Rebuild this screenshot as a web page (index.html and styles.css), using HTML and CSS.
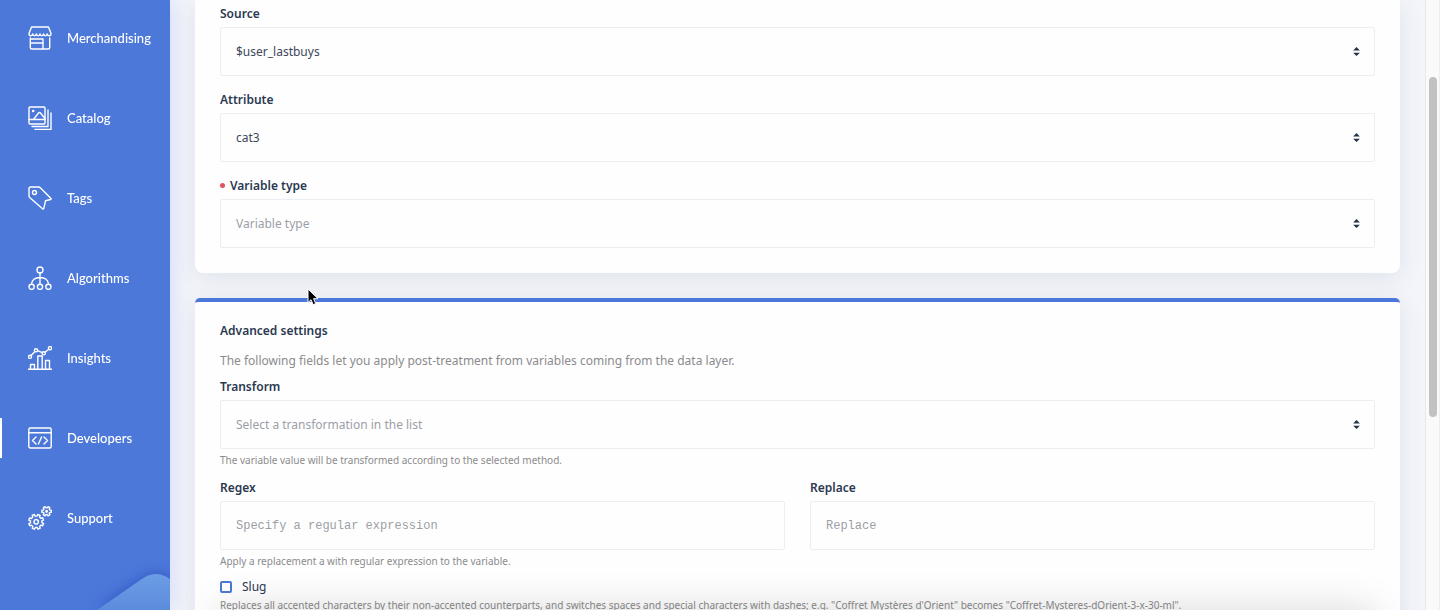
FILE: index.html
```html
<!DOCTYPE html>
<html lang="en">
<head>
    <meta charset="UTF-8">
    <meta name="viewport" content="width=device-width, initial-scale=1.0">
    <title>Variable settings</title>
    <link rel="stylesheet" href="styles.css">
</head>
<body>
    <aside class="sidebar">
        <nav class="menu">
            <a href="#" class="menu-item">
                <svg class="icon" viewBox="0 0 24 24"><path d="M3.500 1h17l2.500 6.500c0 3-3.200 3-3.800.4-.6 2.600-3 2.600-3.600 0-.6 2.600-3 2.600-3.600 0-.6 2.600-3 2.600-3.600 0-.6 2.600-3 2.600-3.600 0C4.200 10.500 1 10.500 1 7.500z"/><path d="M2.300 12v9.500c0 1 .5 1.500 1.500 1.500h16.400c1 0 1.500-.5 1.500-1.500V12M2.500 17h12.500M15 13v10M2.500 13H15"/></svg>
                <span>Merchandising</span>
            </a>
            <a href="#" class="menu-item">
                <svg class="icon" viewBox="0 0 24 24"><rect x="1" y="1" width="16" height="17" rx="1"/><path d="M1 13.500h16M5.500 13.500l5-6.500c.6-.7 1.400-.7 2 0l4.500 5.500M20 4v16.500H4M23 7v16.500H7"/><circle cx="5.200" cy="5" r=".6"/></svg>
                <span>Catalog</span>
            </a>
            <a href="#" class="menu-item">
                <svg class="icon" viewBox="0 0 24 24"><path d="M2.500 1h8c.8 0 1.300.2 1.800.7L23 12.500c.3.4.1.8-.4 1l-5.100 1.300-1.700 7.500c-.2.8-.8.900-1.300.4L1.700 11.500C1.200 11 1 10.500 1 9.800V2.500C1 1.500 1.500 1 2.500 1z"/><circle cx="6.500" cy="6.500" r="2"/></svg>
                <span>Tags</span>
            </a>
            <a href="#" class="menu-item">
                <svg class="icon" viewBox="0 0 24 24"><circle cx="12" cy="4" r="3"/><circle cx="3.600" cy="20.800" r="2.600"/><circle cx="12" cy="20.800" r="2.600"/><circle cx="20.400" cy="20.800" r="2.600"/><path d="M12 7v11.200M3.600 18.200c0-4.200 3.400-6.700 8.400-6.700s8.400 2.500 8.400 6.700"/></svg>
                <span>Algorithms</span>
            </a>
            <a href="#" class="menu-item">
                <svg class="icon" viewBox="0 0 24 24"><path d="M0 23.300h24M2.500 23v-4.500h4V23M9.800 23V10h4.400v13M17.500 23v-8.500h4V23M3 9.500l4-4M9.500 4.700l4.800 2M17 6.300l3.800-3"/><circle cx="2" cy="10.800" r="1.600"/><circle cx="8" cy="4.300" r="1.600"/><circle cx="15.700" cy="7.300" r="1.600"/><circle cx="22" cy="2.200" r="1.600"/></svg>
                <span>Insights</span>
            </a>
            <a href="#" class="menu-item active">
                <svg class="icon" viewBox="0 0 24 24"><rect x=".8" y="2" width="22.400" height="20" rx="1.500"/><path d="M1 6.800h22M8 11l-3.500 3.500L8 18M16 11l3.500 3.500L16 18M13.600 11l-3.200 7"/></svg>
                <span>Developers</span>
            </a>
            <a href="#" class="menu-item">
                <svg class="icon" viewBox="0 0 24 24">
                    <g transform="translate(8.200 15.800) rotate(22)">
                        <path d="M5.650-1.300L7.500-1.200V1.200L5.650 1.300 4.910 3.080 6.150 4.450 4.450 6.150 3.080 4.910 1.300 5.650 1.200 7.500H-1.200L-1.300 5.650-3.080 4.910-4.450 6.150-6.150 4.450-4.910 3.080-5.650 1.300-7.500 1.200V-1.200L-5.650-1.300-4.910-3.080-6.150-4.450-4.450-6.150-3.080-4.910-1.300-5.650-1.200-7.500H1.200L1.300-5.650 3.080-4.910 4.450-6.150 6.150-4.450 4.910-3.080z"/>
                        <circle r="2.200"/>
                    </g>
                    <g transform="translate(18.600 5.200)">
                        <path d="M3.200-1.200L4.700-1V1L3.200 1.200 2.640 2.170 3.220 3.570 1.480 4.570.56 3.370H-.56L-1.480 4.570-3.220 3.570-2.640 2.170-3.200 1.200-4.700 1V-1L-3.200-1.200-2.640-2.170-3.220-3.570-1.480-4.570-.56-3.370H.56L1.480-4.570 3.220-3.570 2.640-2.170z"/>
                        <circle r=".8"/>
                    </g>
                </svg>
                <span>Support</span>
            </a>
        </nav>
        <svg class="sidebar-shape" viewBox="0 0 100 60">
            <defs>
                <linearGradient id="shapeFill" x1="0" y1="0" x2="0" y2="1">
                    <stop offset="0" stop-color="#6b9de5"/>
                    <stop offset="1" stop-color="#5c8bdc"/>
                </linearGradient>
            </defs>
            <path d="M27 60L71 29.500Q85 20 97 27L110 36V60z" fill="url(#shapeFill)"/>
        </svg>
    </aside>

    <main class="content">
        <section class="card card-source">
            <div class="field">
                <label for="source">Source</label>
                <div class="select">
                    <select id="source">
                        <option>$user_lastbuys</option>
                    </select>
                    <svg class="arrows" viewBox="0 0 6 8"><path d="M0 3l3-3 3 3zM0 5h6L3 8z"/></svg>
                </div>
            </div>
            <div class="field">
                <label for="attribute">Attribute</label>
                <div class="select">
                    <select id="attribute">
                        <option>cat3</option>
                    </select>
                    <svg class="arrows" viewBox="0 0 6 8"><path d="M0 3l3-3 3 3zM0 5h6L3 8z"/></svg>
                </div>
            </div>
            <div class="field">
                <label for="type" class="required">Variable type</label>
                <div class="select">
                    <select id="type" class="empty">
                        <option value="">Variable type</option>
                    </select>
                    <svg class="arrows" viewBox="0 0 6 8"><path d="M0 3l3-3 3 3zM0 5h6L3 8z"/></svg>
                </div>
            </div>
        </section>

        <section class="card card-advanced">
            <h2>Advanced settings</h2>
            <p class="intro">The following fields let you apply post-treatment from variables coming from the data layer.</p>
            <div class="field">
                <label for="transform">Transform</label>
                <div class="select">
                    <select id="transform" class="empty">
                        <option value="">Select a transformation in the list</option>
                    </select>
                    <svg class="arrows" viewBox="0 0 6 8"><path d="M0 3l3-3 3 3zM0 5h6L3 8z"/></svg>
                </div>
                <p class="help">The variable value will be transformed according to the selected method.</p>
            </div>
            <div class="row">
                <div class="field">
                    <label for="regex">Regex</label>
                    <input type="text" id="regex" placeholder="Specify a regular expression">
                    <p class="help">Apply a replacement a with regular expression to the variable.</p>
                </div>
                <div class="field">
                    <label for="replace">Replace</label>
                    <input type="text" id="replace" placeholder="Replace">
                </div>
            </div>
            <div class="check">
                <input type="checkbox" id="slug">
                <label for="slug">Slug</label>
            </div>
            <p class="help help-slug">Replaces all accented characters by their non-accented counterparts, and switches spaces and special characters with dashes; e.g. "Coffret Mystères d'Orient" becomes "Coffret-Mysteres-dOrient-3-x-30-ml".</p>
        </section>
    </main>

    <div class="scrollbar">
        <div class="thumb"></div>
    </div>

    <div class="bottom-bar"></div>

    <svg class="cursor" viewBox="0 0 12 18"><path d="M1 1v13.500l3-2.800 2.200 5 2.500-1.100-2.100-4.900H11z"/></svg>
</body>
</html>
```
FILE: styles.css
```css
* {
    box-sizing: border-box;
}
body {
    margin: 0;
    height: 100vh;
    overflow: hidden;
    display: flex;
    background-color: #f3f5fa;
    color: #2b3950;
    font-family: "Noto Sans", sans-serif;
    font-size: 12px;
    line-height: 20px;
}

/* sidebar */
.sidebar {
    position: relative;
    z-index: 1;
    flex: 0 0 170px;
    padding-top: 18px;
    background-color: #4c78da;
    box-shadow: 0 0 20px rgba(90, 115, 240, 0.25);
}
.menu {
    display: flex;
    flex-direction: column;
    gap: 40px;
}
.menu-item {
    display: flex;
    align-items: center;
    gap: 15px;
    height: 40px;
    padding-left: 28px;
    color: #fff;
    font-family: Lato, sans-serif;
    font-size: 13px;
    font-weight: 500;
    text-decoration: none;
}
.menu-item.active {
    padding-left: 26px;
    border-left: 2px solid #fff;
}
.icon {
    width: 24px;
    height: 24px;
    fill: none;
    stroke: #fff;
    stroke-width: 1.4;
    stroke-linecap: round;
    stroke-linejoin: round;
}
.sidebar-shape {
    position: absolute;
    right: 0;
    bottom: 0;
    width: 100px;
    height: 60px;
}
.sidebar-shape path {
    filter: drop-shadow(0 0 7px #2f55c0);
}

/* cards */
.content {
    flex: 1;
    min-width: 0;
    padding: 0 25px;
}
.card {
    padding: 0 25px 25px;
    background-color: #fefefe;
    box-shadow: 0 5px 25px rgba(60, 70, 110, 0.1);
}
.card-source {
    padding-top: 4px;
    border-radius: 0 0 8px 8px;
}
.card-advanced {
    margin-top: 25px;
    padding-top: 19px;
    border-top: 4px solid #4c78da;
    border-radius: 5px;
}
h2 {
    margin: 0 0 10px;
    font-size: 12px;
    font-weight: 600;
}
p {
    margin: 0;
}
.intro {
    margin-bottom: 6px;
    color: #8b8b8d;
}

/* form */
.card-source .field + .field {
    margin-top: 14px;
}
.field label {
    display: block;
    margin-bottom: 3px;
    font-weight: 600;
}
.required::before {
    content: "";
    display: inline-block;
    width: 5px;
    height: 5px;
    margin-right: 5px;
    border-radius: 50%;
    background-color: #e0525c;
    vertical-align: 2px;
}
.select {
    display: grid;
    align-items: center;
}
.select select,
.arrows {
    grid-area: 1 / 1;
}
select,
input[type="text"] {
    display: block;
    width: 100%;
    height: 49px;
    margin: 0;
    padding: 0 15px;
    border: 1px solid #edeef2;
    border-radius: 2px;
    background-color: transparent;
    color: #3c475a;
    font-family: inherit;
    font-size: 12px;
    appearance: none;
}
select.empty {
    color: #9c9fa7;
}
input[type="text"] {
    font-family: "Courier New", "Liberation Mono", monospace;
}
input::placeholder {
    color: #9c9fa7;
}
.arrows {
    justify-self: end;
    width: 7px;
    height: 9px;
    margin-right: 15px;
    fill: #253248;
    pointer-events: none;
}
.help {
    margin-top: 3px;
    color: #8b8b8d;
    font-size: 10px;
    line-height: 16px;
}
.row {
    display: grid;
    grid-template-columns: 1fr 1fr;
    gap: 25px;
    margin-top: 10px;
}
.check {
    display: flex;
    align-items: center;
    gap: 10px;
    margin-top: 8px;
}
.check input {
    width: 12px;
    height: 12px;
    margin: 0;
    border: 2px solid #4c78da;
    border-radius: 2px;
    appearance: none;
}
.help-slug {
    margin-top: 0;
    white-space: nowrap;
}

/* scrollbar */
.scrollbar {
    flex: 0 0 15px;
    padding: 77px 2px 0 3px;
    border-left: 1px solid #e8e8e8;
    border-right: 1px solid #ededed;
    background-color: #fafafa;
}
.thumb {
    height: 340px;
    border-radius: 4px;
    background-color: #c1c1c1;
}

/* save bar, only its shadow reaches the viewport */
.bottom-bar {
    position: fixed;
    left: 220px;
    right: 65px;
    bottom: -60px;
    height: 60px;
    box-shadow: 0 0 40px rgba(0, 0, 0, 0.15);
    pointer-events: none;
}
.cursor {
    position: fixed;
    left: 307px;
    top: 288px;
    width: 12px;
    height: 18px;
    fill: #000;
    stroke: #fff;
    stroke-width: 1;
    pointer-events: none;
}
```
